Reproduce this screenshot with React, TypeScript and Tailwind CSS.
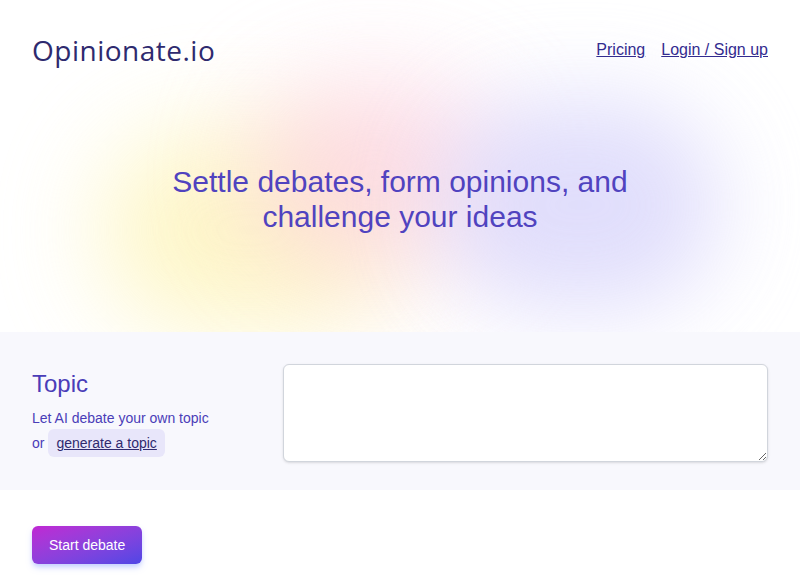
import React from 'react';

const App: React.FC = () => {
  return (
    <div className="min-h-screen bg-white font-['Liberation_Sans',Arial,sans-serif] overflow-hidden">
      {/* Header + Hero */}
      <div className="relative">
        {/* soft colour blobs */}
        <div className="pointer-events-none absolute left-[100px] top-[130px] w-[300px] h-[200px] rounded-full bg-[#fdf3b0] opacity-70 blur-[50px]" />
        <div className="pointer-events-none absolute left-[250px] top-[80px] w-[250px] h-[190px] rounded-full bg-[#fcd0e0] opacity-70 blur-[50px]" />
        <div className="pointer-events-none absolute left-[440px] top-[100px] w-[280px] h-[210px] rounded-full bg-[#d9d6fb] opacity-80 blur-[45px]" />

        <header className="relative flex items-center justify-between px-8 pt-[28px] h-[72px]">
          <div className="text-[28px] tracking-[0.5px] text-[#2e2a6e] font-['Open_Sans',sans-serif] leading-none">
            Opinionate.io
          </div>
          <nav className="flex items-center gap-4 text-base text-[#332b8f]">
            <a href="#" className="underline">Pricing</a>
            <a href="#" className="underline">Login / Sign up</a>
          </nav>
        </header>

        <section className="relative h-[260px] flex items-center justify-center">
          <h1 className="text-[30px] leading-[35px] text-[#5043bf] text-center max-w-[480px] -mt-[7px]">
            Settle debates, form opinions, and challenge your ideas
          </h1>
        </section>
      </div>

      {/* Topic */}
      <section className="relative bg-[#f8f8fd] flex px-8 pt-8 pb-7 h-[158px]">
        <div className="w-[251px] pt-[4px]">
          <h2 className="text-2xl text-[#4a3db8] leading-8">Topic</h2>
          <p className="mt-[8px] text-sm text-[#4a3db8]">Let AI debate your own topic</p>
          <div className="mt-[1px] flex items-center gap-[4px] text-sm text-[#4a3db8]">
            <span>or</span>
            <button className="px-2 py-[4px] rounded-md bg-[#e8e6fa] text-[#2f2a6e] underline">
              generate a topic
            </button>
          </div>
        </div>
        <textarea className="flex-1 h-[98px] rounded-md border border-gray-300 bg-white shadow-sm" />
      </section>

      <div className="px-8 pt-[36px]">
        <button className="h-[38px] px-[17px] rounded-md bg-gradient-to-br from-[#c026d3] to-[#4f46e5] text-white text-sm shadow-md shadow-indigo-200">
          Start debate
        </button>
      </div>
    </div>
  );
};

export default App;
